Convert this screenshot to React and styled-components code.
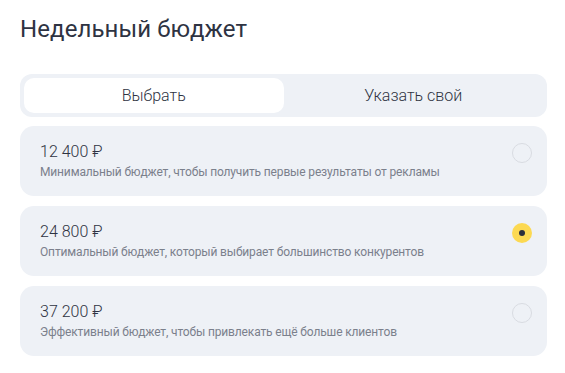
import React from 'react';
import styled, { createGlobalStyle } from 'styled-components';

const GlobalStyle = createGlobalStyle`
  body {
    margin: 0;
    background: #ffffff;
    font-family: Roboto, "Noto Sans", sans-serif;
    color: #2b2f3b;
  }
`;

const options = [
  { price: '12 400 ₽', text: 'Минимальный бюджет, чтобы получить первые результаты от рекламы' },
  { price: '24 800 ₽', text: 'Оптимальный бюджет, который выбирает большинство конкурентов' },
  { price: '37 200 ₽', text: 'Эффективный бюджет, чтобы привлекать ещё больше клиентов' },
];

function App() {
  const [tab, setTab] = React.useState(0);
  const [selected, setSelected] = React.useState(1);

  return (
    <>
      <GlobalStyle />
      <Page>
        <Title>Недельный бюджет</Title>
        <Tabs>
          <Tab active={tab === 0} onClick={() => setTab(0)}>Выбрать</Tab>
          <Tab active={tab === 1} onClick={() => setTab(1)}>Указать свой</Tab>
        </Tabs>
        <List>
          {options.map((o, i) => (
            <Card key={o.price} onClick={() => setSelected(i)}>
              <Info>
                <Price>{o.price}</Price>
                <Desc>{o.text}</Desc>
              </Info>
              <Radio checked={selected === i} />
            </Card>
          ))}
        </List>
      </Page>
    </>
  );
}

const Page = styled.div`
  padding: 14px 18px 0 20px;
  width: 527px;
`;

const Title = styled.h1`
  margin: 0 0 30px;
  font-size: 24px;
  font-weight: 400;
  line-height: 30px;
  color: #2e3342;
  letter-spacing: 0.1px;
`;

const Tabs = styled.div`
  display: grid;
  grid-template-columns: 1fr 1fr;
  padding: 4px;
  background: #eef1f6;
  border-radius: 12px;
  margin-bottom: 9px;
`;

const Tab = styled.div`
  height: 35px;
  display: flex;
  align-items: center;
  justify-content: center;
  border-radius: 10px;
  font-size: 16px;
  font-weight: 300;
  color: #2e3342;
  background: ${p => (p.active ? '#ffffff' : 'transparent')};
  cursor: pointer;
`;

const List = styled.div`
  display: flex;
  flex-direction: column;
  gap: 10px;
`;

const Card = styled.div`
  height: 70px;
  box-sizing: border-box;
  padding: 0 15px 0 20px;
  display: flex;
  align-items: center;
  justify-content: space-between;
  background: #eef1f6;
  border-radius: 14px;
  cursor: pointer;
`;

const Info = styled.div`
  display: flex;
  flex-direction: column;
  gap: 2px;
`;

const Price = styled.div`
  font-size: 16px;
  font-weight: 300;
  line-height: 20px;
  color: #2e3342;
`;

const Desc = styled.div`
  font-size: 12px;
  line-height: 16px;
  color: #7b808c;
  letter-spacing: -0.15px;
`;

const Radio = styled.span`
  width: 20px;
  height: 20px;
  box-sizing: border-box;
  border-radius: 50%;
  border: ${p => (p.checked ? 'none' : '1px solid #d9dce2')};
  background: ${p => (p.checked ? '#fcd952' : 'transparent')};
  display: flex;
  align-items: center;
  justify-content: center;
  margin-top: -16px;

  &::after {
    content: '';
    display: ${p => (p.checked ? 'block' : 'none')};
    width: 6px;
    height: 6px;
    border-radius: 50%;
    background: #2b2f3b;
  }
`;

export default App;
